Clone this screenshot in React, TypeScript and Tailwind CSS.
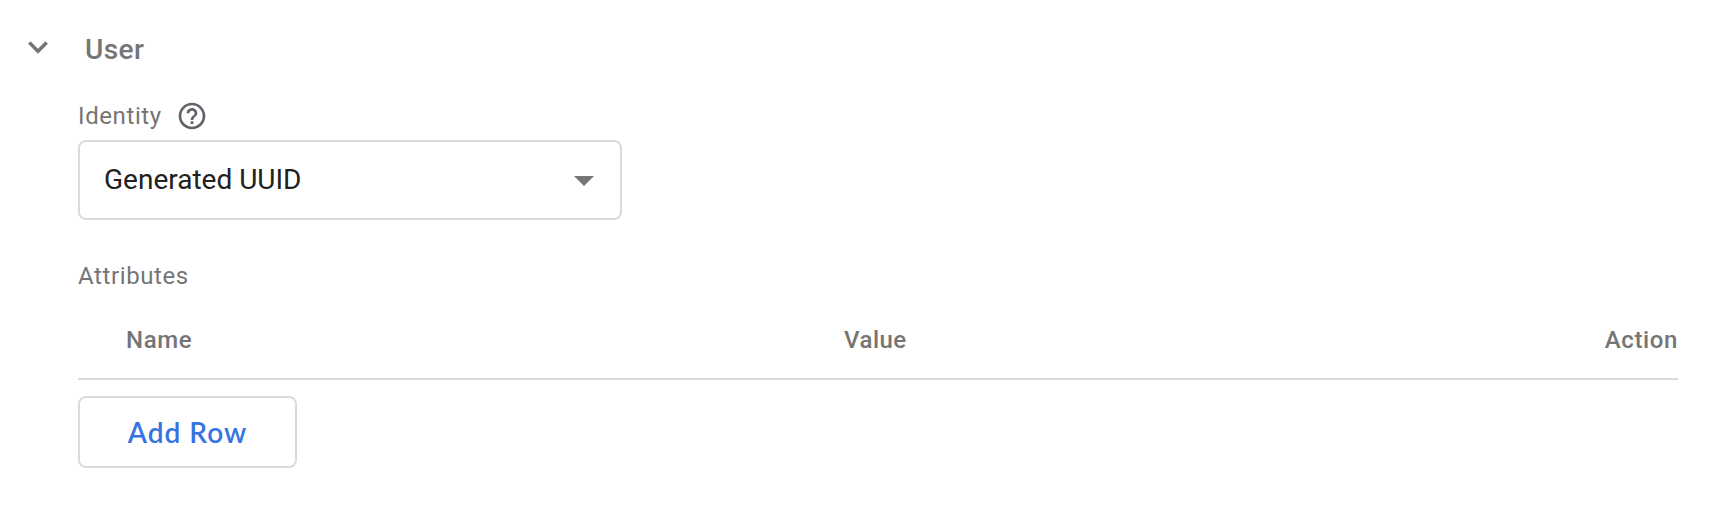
export default function App() {
  return (
    <main className="h-[508px] w-[1710px] bg-white font-['Roboto',sans-serif] text-[#757575]">
      <header className="flex h-[98px] items-center gap-[34px] pl-7">
        <svg width="20" height="13" viewBox="0 0 20 13" className="-mt-1 shrink-0"><path d="M1.300 1.500 10 10.200l8.700-8.700" fill="none" stroke="#757575" strokeWidth="3.500" /></svg>
        <h2 className="ml-[3px] mt-[2px] text-[28px] font-medium leading-8 tracking-[0.4px]">User</h2>
      </header>
      <section className="pl-[78px] pr-8">
        <div className="flex h-[42px] items-center gap-[14px] pb-[6px]">
          <span className="text-[24px] leading-9 tracking-[0.6px]">Identity</span>
          <svg width="32" height="32" viewBox="0 0 24 24" fill="#5f6368"><path d="M11 16h2v2h-2v-2zm1-14C6.480 2 2 6.480 2 12s4.480 10 10 10 10-4.480 10-10S17.520 2 12 2zm0 18c-4.410 0-8-3.590-8-8s3.590-8 8-8 8 3.590 8 8-3.590 8-8 8zm0-14c-2.210 0-4 1.790-4 4h2c0-1.100.9-2 2-2s2 .9 2 2c0 2-3 1.750-3 5h2c0-2.250 3-2.500 3-5 0-2.210-1.790-4-4-4z" /></svg>
        </div>
        <button className="flex h-20 w-[544px] items-center justify-between rounded-lg border-2 border-[#dadbe0] pl-6 pr-[26px] text-[28px] text-[#212121]">
          Generated UUID
          <svg width="20" height="10" viewBox="0 0 20 10" className="mt-[2px]"><path d="M0 0h20L10 10z" fill="#757575" /></svg>
        </button>
        <p className="mt-[38px] text-[24px] leading-9 tracking-[0.6px]">Attributes</p>
        <div className="mt-2 flex h-[78px] items-center border-b-2 border-[#dadbe0] text-[24px] font-medium tracking-[0.6px]">
          <span className="w-[766px] pl-12">Name</span><span className="grow tracking-[0.5px]">Value</span><span>Action</span>
        </div>
        <button className="mt-4 flex h-[72px] w-[219px] items-center justify-center rounded-lg border-2 border-[#dadbe0] font-['Lato',sans-serif] text-[28px] font-semibold tracking-[1px] text-[#3574e2]">Add Row</button>
      </section>
    </main>
  );
}
